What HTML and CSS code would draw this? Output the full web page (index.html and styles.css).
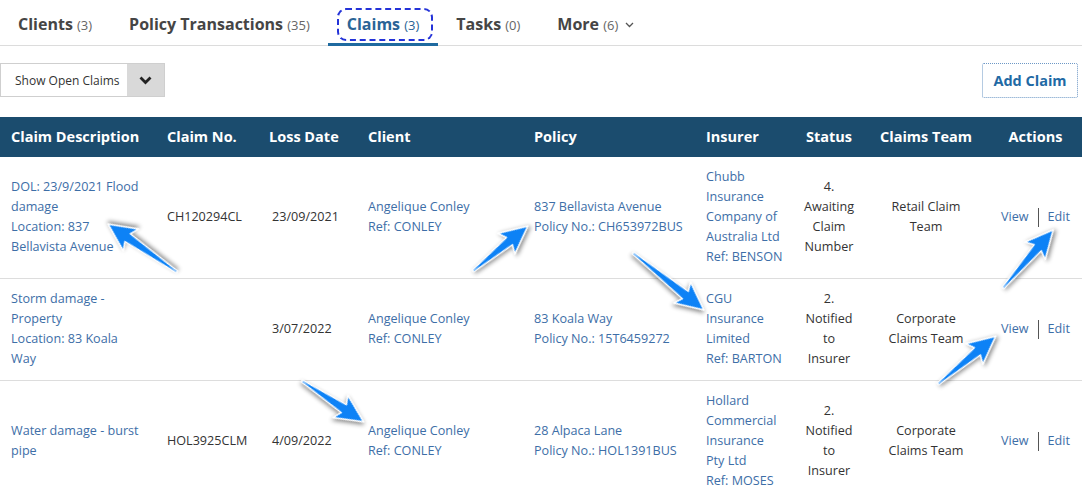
FILE: index.html
```html
<!DOCTYPE html>
<html lang="en">
<head>
<meta charset="utf-8">
<title>Claims</title>
<link rel="stylesheet" href="styles.css">
</head>
<body>
<div class="page">
  <nav class="tabs">
    <a class="tab">Clients <span class="count">(3)</span></a>
    <a class="tab">Policy Transactions <span class="count">(35)</span></a>
    <a class="tab active"><span class="focus">Claims <span class="count">(3)</span></span></a>
    <a class="tab">Tasks <span class="count">(0)</span></a>
    <a class="tab">More <span class="count">(6)</span> <svg class="more-caret" width="9" height="6" viewBox="0 0 9 6"><polyline points="1,1 4.5,4.5 8,1" fill="none" stroke="#555" stroke-width="1.3"/></svg></a>
  </nav>

  <div class="toolbar">
    <div class="select">
      <span class="select-text">Show Open Claims</span>
      <span class="select-btn"><svg width="13" height="9" viewBox="0 0 13 9"><polyline points="1.5,1.5 6.5,6.5 11.5,1.5" fill="none" stroke="#222" stroke-width="2.8"/></svg></span>
    </div>
    <button class="add-btn">Add Claim</button>
  </div>

  <table class="claims">
    <colgroup>
      <col class="w-desc"><col class="w-no"><col class="w-date"><col class="w-client"><col class="w-policy"><col class="w-insurer"><col class="w-status"><col class="w-team"><col class="w-actions">
    </colgroup>
    <thead>
      <tr>
        <th>Claim Description</th>
        <th>Claim No.</th>
        <th>Loss Date</th>
        <th>Client</th>
        <th>Policy</th>
        <th>Insurer</th>
        <th class="c">Status</th>
        <th class="c">Claims Team</th>
        <th class="c">Actions</th>
      </tr>
    </thead>
    <tbody>
      <tr>
        <td><a class="link">DOL: 23/9/2021 Flood<br>damage<br>Location: 837<br>Bellavista Avenue</a></td>
        <td>CH120294CL</td>
        <td class="date">23/09/2021</td>
        <td><a class="link">Angelique Conley<br>Ref: CONLEY</a></td>
        <td><a class="link">837 Bellavista Avenue<br>Policy No.: CH653972BUS</a></td>
        <td><a class="link">Chubb<br>Insurance<br>Company of<br>Australia Ltd<br>Ref: BENSON</a></td>
        <td class="c">4.<br>Awaiting<br>Claim<br>Number</td>
        <td class="c">Retail Claim<br>Team</td>
        <td class="c"><span class="actions"><a class="link">View</a><span class="sep"></span><a class="link">Edit</a></span></td>
      </tr>
      <tr>
        <td><a class="link">Storm damage -<br>Property<br>Location: 83 Koala<br>Way</a></td>
        <td></td>
        <td class="date">3/07/2022</td>
        <td><a class="link">Angelique Conley<br>Ref: CONLEY</a></td>
        <td><a class="link">83 Koala Way<br>Policy No.: 15T6459272</a></td>
        <td><a class="link">CGU<br>Insurance<br>Limited<br>Ref: BARTON</a></td>
        <td class="c">2.<br>Notified<br>to<br>Insurer</td>
        <td class="c">Corporate<br>Claims Team</td>
        <td class="c"><span class="actions"><a class="link">View</a><span class="sep"></span><a class="link">Edit</a></span></td>
      </tr>
      <tr>
        <td><a class="link">Water damage - burst<br>pipe</a></td>
        <td>HOL3925CLM</td>
        <td class="date">4/09/2022</td>
        <td><a class="link">Angelique Conley<br>Ref: CONLEY</a></td>
        <td><a class="link">28 Alpaca Lane<br>Policy No.: HOL1391BUS</a></td>
        <td><a class="link">Hollard<br>Commercial<br>Insurance<br>Pty Ltd<br>Ref: MOSES</a></td>
        <td class="c">2.<br>Notified<br>to<br>Insurer</td>
        <td class="c">Corporate<br>Claims Team</td>
        <td class="c"><span class="actions"><a class="link">View</a><span class="sep"></span><a class="link">Edit</a></span></td>
      </tr>
    </tbody>
  </table>

  <svg class="arrows" width="1082" height="488" viewBox="0 0 1082 488">
    <g class="arrow" transform="translate(177,272) rotate(214.8)"><path d="M0,-1 L60,-4.8 L56,-13.5 L84,0 L56,13.5 L60,4.8 L0,1 Z"/></g>
    <g class="arrow" transform="translate(473,271) rotate(-39.3)"><path d="M0,-1 L47,-4.8 L43,-13.5 L71,0 L43,13.5 L47,4.8 L0,1 Z"/></g>
    <g class="arrow" transform="translate(633,253) rotate(38.8)"><path d="M0,-1 L67,-4.8 L63,-13.5 L91,0 L63,13.5 L67,4.8 L0,1 Z"/></g>
    <g class="arrow" transform="translate(1003,288) rotate(-49.2)"><path d="M0,-1 L53,-4.8 L49,-13.5 L77,0 L49,13.5 L53,4.8 L0,1 Z"/></g>
    <g class="arrow" transform="translate(938,384) rotate(-39.6)"><path d="M0,-1 L51,-4.8 L47,-13.5 L75,0 L47,13.5 L51,4.8 L0,1 Z"/></g>
    <g class="arrow" transform="translate(302,381) rotate(33.5)"><path d="M0,-1 L50,-4.8 L46,-13.5 L74,0 L46,13.5 L50,4.8 L0,1 Z"/></g>
  </svg>
</div>
</body>
</html>
```

FILE: styles.css
```css
* { box-sizing: border-box; }

html, body {
  margin: 0;
  padding: 0;
  background: #fff;
}

body {
  font-family: "Open Sans", "Liberation Sans", Arial, sans-serif;
  color: #333;
  overflow: hidden;
}

.page {
  position: relative;
  width: 1082px;
  height: 488px;
  overflow: hidden;
}

/* Tabs */
.tabs {
  display: flex;
  align-items: flex-end;
  border-bottom: 1px solid #dcdcdc;
  height: 46px;
}

.tab {
  display: block;
  padding: 13px 18.5px 6px;
  line-height: 24px;
  font-size: 16px;
  font-weight: 700;
  color: #454545;
  border-bottom: 3px solid transparent;
  margin-bottom: -1px;
  white-space: nowrap;
}

.tab:first-child { padding-left: 18px; }

.tab .count {
  font-size: 13px;
  font-weight: 400;
  color: #666;
}

.tab.active {
  color: #2a6496;
  border-bottom-color: #1f6aa0;
}

.tab.active .count { color: #2a6496; }

.focus {
  padding: 3px 12px 4px 8px;
  margin: 0 -14px 0 -10px;
  border: 2px dashed #2433d8;
  border-radius: 9px;
}

.more-caret {
  margin-left: 2px;
  vertical-align: 2px;
}

/* Toolbar */
.toolbar {
  display: flex;
  justify-content: space-between;
  align-items: center;
  margin-top: 17px;
  padding-right: 4px;
  height: 34px;
}

.select {
  display: flex;
  width: 165px;
  height: 34px;
  border: 1px solid #cfcfcf;
}

.select-text {
  flex: 1;
  display: flex;
  align-items: center;
  padding-left: 14px;
  font-size: 12px;
  color: #333;
  background: #fff;
}

.select-btn {
  width: 37px;
  display: flex;
  align-items: center;
  justify-content: center;
  background: #d9d9d9;
}

.add-btn {
  width: 96px;
  height: 35px;
  background: #fff;
  border: 1px dotted #6d98c6;
  border-radius: 2px;
  font-family: "Open Sans", "Liberation Sans", Arial, sans-serif;
  font-size: 14.5px;
  font-weight: 700;
  color: #1f6aa5;
  padding: 0;
}

/* Table */
.claims {
  margin-top: 20px;
  width: 1082px;
  border-collapse: collapse;
  table-layout: fixed;
  font-size: 12.6px;
  line-height: 20px;
  color: #333;
}

.w-desc { width: 156px; }
.w-no { width: 102px; }
.w-date { width: 99px; }
.w-client { width: 166px; }
.w-policy { width: 172px; }
.w-insurer { width: 100px; }
.w-status { width: 68px; }
.w-team { width: 126px; }
.w-actions { width: 93px; }

.claims th {
  background: #1b4c6e;
  color: #fff;
  font-size: 14.5px;
  font-weight: 700;
  line-height: 20px;
  padding: 10px 11px;
  text-align: left;
  white-space: nowrap;
}

.claims td {
  padding: 10px 11px 11px;
  vertical-align: middle;
  border-bottom: 1px solid #dddddd;
  white-space: nowrap;
}

.claims .c {
  text-align: center;
  padding-left: 2px;
  padding-right: 2px;
}

.claims td.date { padding-left: 14px; }

.link {
  color: #3d6ea7;
  text-decoration: none;
}

.actions {
  display: inline-flex;
  align-items: center;
}

.sep {
  display: inline-block;
  width: 1px;
  height: 19px;
  background: #555;
  margin: 0 9px 0 9px;
}

/* Annotation arrows (overlay) */
.arrows {
  position: absolute;
  top: 0;
  left: 0;
  pointer-events: none;
}

.arrow path {
  fill: #0d82f6;
  stroke: #ffffff;
  stroke-width: 1.6;
  stroke-linejoin: round;
  filter: drop-shadow(1px 2px 2px rgba(0, 0, 0, 0.45));
}
```
